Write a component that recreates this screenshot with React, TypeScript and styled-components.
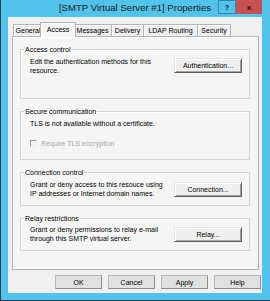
import React from 'react';
import styled, { createGlobalStyle } from 'styled-components';

const Global = createGlobalStyle`
  html, body { margin: 0; padding: 0; }
  body {
    width: 270px; height: 301px; overflow: hidden;
    font-family: "Liberation Sans", Arial, sans-serif;
  }
  *, *::before, *::after { box-sizing: border-box; }
`;

const Window = styled.div`
  width: 270px;
  height: 301px;
  background: #52c3eb;
  border-left: 1px solid #2d3b44;
  border-bottom: 1px solid #2d3b44;
  padding: 0 8px 7px 7px;
  display: flex;
  flex-direction: column;
`;

const TitleBar = styled.div`
  height: 17px;
  display: grid;
  grid-template-columns: 1fr auto 1fr;
  align-items: start;
`;

const Title = styled.div`
  grid-column: 2;
  font-size: 9.6px;
  line-height: 16px;
  color: #1b1b1b;
  white-space: nowrap;
`;

const Caption = styled.div`
  grid-column: 3;
  justify-self: end;
  display: flex;
`;

const CapButton = styled.div<{ $close?: boolean }>`
  width: ${p => (p.$close ? 26 : 18)}px;
  height: 14px;
  display: flex;
  align-items: center;
  justify-content: center;
  font-size: 8px;
  font-weight: bold;
  background: ${p => (p.$close ? '#c75050' : '#52c3eb')};
  border: ${p => (p.$close ? 'none' : '1px solid #3a87ab')};
  color: ${p => (p.$close ? '#2a0c0c' : '#17323f')};
`;

const Client = styled.div`
  flex: 1;
  background: #f0f0f0;
  display: flex;
  flex-direction: column;
  padding: 5px 1px 4px 4px;
`;

const TabStrip = styled.div`
  height: 14px;
  display: flex;
  align-items: flex-end;
  padding-left: 1px;
`;

const Tab = styled.div<{ $w: number; $active?: boolean }>`
  position: relative;
  width: ${p => p.$w + (p.$active ? 4 : 0)}px;
  height: ${p => (p.$active ? 15 : 12)}px;
  margin: ${p => (p.$active ? '0 -2px -1px -3px' : '0 0 0 -1px')};
  z-index: ${p => (p.$active ? 1 : 0)};
  border: 1px solid #b4b4b4;
  border-bottom: none;
  background: ${p => (p.$active ? '#f5f5f5' : '#eeeeee')};
  box-shadow: inset 1px 1px 0 #ffffff;
  font-size: 7px;
  line-height: 11px;
  padding-top: ${p => (p.$active ? 1 : 0)}px;
  text-align: center;
  color: #000;
  white-space: nowrap;
  &:first-child { margin-left: 0; }
`;

const Panel = styled.div`
  height: 234px;
  margin-right: 2px;
  border: 1px solid #b4b4b4;
  background: #f5f5f5;
  box-shadow: inset 1px 1px 0 #ffffff;
  padding: 8px 8px 0 7px;
  display: flex;
  flex-direction: column;
  gap: 8px;
`;

const Group = styled.fieldset<{ $h: number; $pt?: number }>`
  margin: 0;
  min-width: 0;
  height: ${p => p.$h}px;
  border: 1px solid #d3d3d3;
  box-shadow: inset 1px 1px 0 #ffffff;
  padding: ${p => p.$pt ?? 3}px 7px 0 9px;
`;

const Legend = styled.legend`
  font-size: 7px;
  line-height: 9px;
  padding: 0 1px;
  margin-left: -6px;
  color: #000;
`;

const Row = styled.div`
  display: flex;
  justify-content: space-between;
  align-items: flex-start;
`;

const Text = styled.div<{ $w?: number }>`
  font-size: 7px;
  line-height: 9px;
  color: ${p => '#000'};
  width: ${p => (p.$w ? `${p.$w}px` : 'auto')};
`;

const Button = styled.div<{ $top?: number }>`
  width: 68px;
  height: 15px;
  margin-top: ${p => p.$top ?? 1}px;
  display: flex;
  align-items: center;
  justify-content: center;
  font-size: 7px;
  color: #000;
  background: #efefef;
  border: 1px solid;
  border-color: #e6e6e6 #5f5f5f #5f5f5f #e6e6e6;
  box-shadow: inset 1px 1px 0 #ffffff, inset -1px -1px 0 #a3a3a3;
`;

const CheckRow = styled.div`
  margin-top: 11px;
  display: flex;
  align-items: center;
  height: 9px;
`;

const CheckBox = styled.span`
  width: 7px;
  height: 7px;
  margin-right: 4px;
  border: 1px solid;
  border-color: #9a9a9a #ececec #ececec #9a9a9a;
  background: #f3f3f3;
`;

const Disabled = styled.span`
  font-size: 7px;
  line-height: 9px;
  color: #a8a8a8;
`;

const Footer = styled.div`
  margin-top: 5px;
  display: flex;
  justify-content: flex-end;
  gap: 6px;
`;

const FootButton = styled.div`
  width: 47px;
  height: 14px;
  display: flex;
  align-items: center;
  justify-content: center;
  font-size: 7px;
  color: #000;
  background: #e1e1e1;
  border: 1px solid;
  border-color: #b9b9b9 #8e8e8e #8e8e8e #b9b9b9;
`;

const tabs = [
  { label: 'General', w: 30 },
  { label: 'Access', w: 32, active: true },
  { label: 'Messages', w: 39 },
  { label: 'Delivery', w: 33 },
  { label: 'LDAP Routing', w: 55 },
  { label: 'Security', w: 34 },
];

export default function App() {
  return (
    <>
      <Global />
      <Window>
        <TitleBar>
          <Title>[SMTP Virtual Server #1] Properties</Title>
          <Caption>
            <CapButton>?</CapButton>
            <CapButton $close>x</CapButton>
          </Caption>
        </TitleBar>
        <Client>
          <TabStrip>
            {tabs.map(t => (
              <Tab key={t.label} $w={t.w} $active={t.active}>
                {t.label}
              </Tab>
            ))}
          </TabStrip>
          <Panel>
            <Group $h={54}>
              <Legend>Access control</Legend>
              <Row>
                <Text $w={126}>Edit the authentication methods for this resource.</Text>
                <Button>Authentication...</Button>
              </Row>
            </Group>
            <Group $h={53}>
              <Legend>Secure communication</Legend>
              <Text>TLS is not available without a certificate.</Text>
              <CheckRow>
                <CheckBox />
                <Disabled>Require TLS encryption</Disabled>
              </CheckRow>
            </Group>
            <Group $h={38}>
              <Legend>Connection control</Legend>
              <Row>
                <Text $w={136}>Grant or deny access to this resouce using IP addresses or Internet domain names.</Text>
                <Button $top={2}>Connection...</Button>
              </Row>
            </Group>
            <Group $h={37} $pt={2}>
              <Legend>Relay restrictions</Legend>
              <Row>
                <Text $w={132}>Grant or deny permissions to relay e-mail through this SMTP virtual server.</Text>
                <Button $top={2}>Relay...</Button>
              </Row>
            </Group>
          </Panel>
          <Footer>
            <FootButton>OK</FootButton>
            <FootButton>Cancel</FootButton>
            <FootButton>Apply</FootButton>
            <FootButton>Help</FootButton>
          </Footer>
        </Client>
      </Window>
    </>
  );
}
